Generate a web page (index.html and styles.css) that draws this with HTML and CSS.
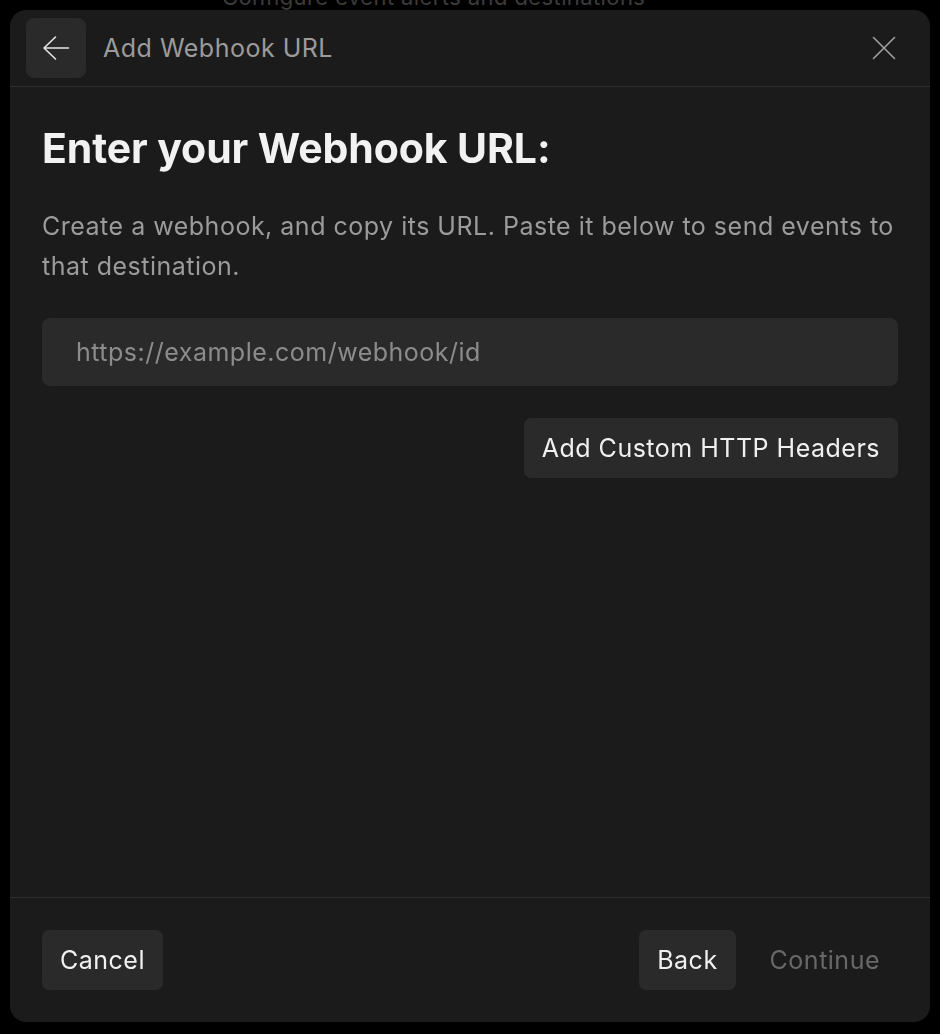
FILE: index.html
```html
<!DOCTYPE html>
<html lang="en">
<head>
<meta charset="utf-8">
<title>Add Webhook URL</title>
<link rel="stylesheet" href="styles.css">
</head>
<body>
<div class="page">
  <p class="page-sub">Configure event alerts and destinations</p>
</div>
<div class="modal">
  <header class="modal-head">
    <button class="icon-btn back-btn" aria-label="Back">
      <svg width="28" height="28" viewBox="0 0 28 28" fill="none" stroke="#e6e6e6" stroke-width="1.6" stroke-linecap="round" stroke-linejoin="round"><path d="M26.5 14H2M13.5 3 2 14 13.5 25"/></svg>
    </button>
    <h2 class="modal-title">Add Webhook URL</h2>
    <button class="icon-btn close-btn" aria-label="Close">
      <svg width="24" height="24" viewBox="0 0 24 24" fill="none" stroke="#a0a0a0" stroke-width="1.6" stroke-linecap="round"><path d="M1.5 1.5 22.5 22.5M22.5 1.5 1.5 22.5"/></svg>
    </button>
  </header>
  <main class="modal-body">
    <h1 class="heading">Enter your Webhook URL:</h1>
    <p class="desc">Create a webhook, and copy its URL. Paste it below to send events to that destination.</p>
    <input class="url-input" type="text" placeholder="https://example.com/webhook/id">
    <div class="row-end">
      <button class="btn">Add Custom HTTP Headers</button>
    </div>
  </main>
  <footer class="modal-foot">
    <button class="btn">Cancel</button>
    <div class="foot-right">
      <button class="btn">Back</button>
      <button class="btn btn-ghost" disabled>Continue</button>
    </div>
  </footer>
</div>
</body>
</html>
```
FILE: styles.css
```css
* { box-sizing: border-box; }
html, body { margin: 0; padding: 0; }
body {
  background: #000;
  font-family: Inter, "Noto Sans", sans-serif;
  height: 1034px;
  overflow: hidden;
}
.page { padding-left: 222px; }
.page-sub {
  margin: -16px 0 0;
  font-size: 22px;
  line-height: 26px;
  color: #3c3c3c;
  letter-spacing: 0.4px;
}
.modal {
  position: fixed;
  left: 10px;
  top: 10px;
  width: 920px;
  height: 1012px;
  background: #1b1b1b;
  border-radius: 16px;
  display: flex;
  flex-direction: column;
  overflow: hidden;
}
.modal-head {
  display: flex;
  align-items: center;
  padding: 8px 16px;
  border-bottom: 1px solid #2e2e2e;
  height: 77px;
}
.icon-btn {
  border: 0;
  padding: 0;
  background: transparent;
  display: flex;
  align-items: center;
  justify-content: center;
  cursor: pointer;
}
.back-btn {
  width: 60px;
  height: 60px;
  border-radius: 8px;
  background: #2a2a2a;
}
.modal-title {
  margin: 0 0 0 17px;
  font-size: 25px;
  letter-spacing: 0.5px;
  font-weight: 400;
  color: #9b9b9b;
  flex: 1;
}
.close-btn {
  width: 40px;
  height: 40px;
  margin-right: 10px;
}
.modal-body {
  flex: 1;
  padding: 37px 32px 0;
  display: flex;
  flex-direction: column;
}
.heading {
  margin: 0;
  font-size: 41px;
  line-height: 48px;
  font-weight: 700;
  color: #f2f2f2;
  letter-spacing: -0.1px;
}
.desc {
  margin: 34px 0 0;
  font-size: 25px;
  letter-spacing: 0.5px;
  line-height: 40px;
  color: #9b9b9b;
}
.url-input {
  margin-top: 32px;
  height: 68px;
  width: 100%;
  border: 0;
  outline: none;
  border-radius: 8px;
  background: #2a2a2a;
  padding: 0 34px;
  font-family: inherit;
  font-size: 25px;
  letter-spacing: 0.5px;
  color: #eee;
}
.url-input::placeholder { color: #8c8c8c; }
.row-end {
  margin-top: 32px;
  display: flex;
  justify-content: flex-end;
}
.btn {
  height: 60px;
  padding: 0 18px;
  border: 0;
  border-radius: 7px;
  background: #2a2a2a;
  color: #f0f0f0;
  font-family: inherit;
  font-size: 25px;
  letter-spacing: 0.5px;
  cursor: pointer;
}
.btn-ghost {
  background: transparent;
  color: #686868;
}
.modal-foot {
  border-top: 1px solid #2e2e2e;
  padding: 32px 32px 32px;
  display: flex;
  justify-content: space-between;
  align-items: center;
}
.foot-right {
  display: flex;
  gap: 16px;
}
```
